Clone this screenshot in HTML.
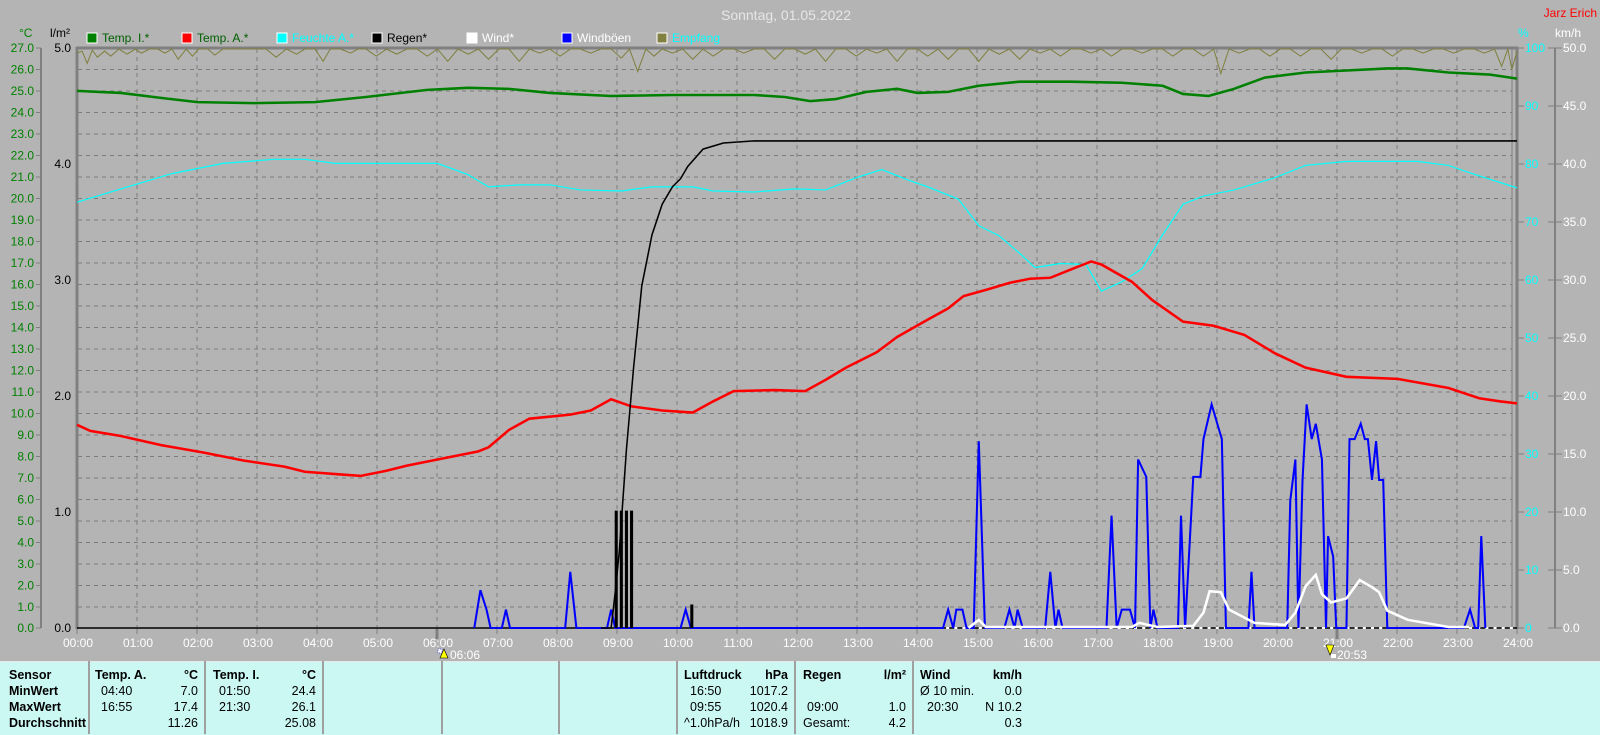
<!DOCTYPE html>
<html><head><meta charset="utf-8"><style>
html,body{margin:0;padding:0;width:1600px;height:734px;overflow:hidden;background:#b4b4b4;font-family:"Liberation Sans",Arial,sans-serif}
#panel{position:absolute;left:0;top:661px;width:1600px;height:73px;background:#ccf8f4;border-top:1px solid #e8e8e8}
.sep{position:absolute;top:661px;width:2px;height:73px;background:#a0a0a0}
.t{position:absolute;font-size:12.5px;color:#000;white-space:nowrap;line-height:15px}
.b{font-weight:bold}
.r{text-align:right}
</style></head><body>
<svg width="1600" height="661" style="position:absolute;left:0;top:0" font-family="Liberation Sans, Arial, sans-serif" font-size="12">
<text x="786" y="20" fill="#e6e6e6" font-size="14" text-anchor="middle">Sonntag, 01.05.2022</text>
<text x="1597" y="17" fill="#ff0000" font-size="12" text-anchor="end">Jarz Erich</text>
<text x="19" y="37" fill="#008000">°C</text>
<text x="50" y="37" fill="#000">l/m²</text>
<text x="1518" y="37" fill="#00ffff">%</text>
<text x="1555" y="37" fill="#fff">km/h</text>
<!-- legend -->
<g font-size="12">
<rect x="87" y="33" width="10" height="10" fill="#008000" stroke="#fff"/><text x="102" y="42" fill="#006000">Temp. I.*</text>
<rect x="182" y="33" width="10" height="10" fill="#ff0000" stroke="#fff"/><text x="197" y="42" fill="#006000">Temp. A.*</text>
<rect x="277" y="33" width="10" height="10" fill="#00ffff" stroke="#fff"/><text x="292" y="42" fill="#00ffff">Feuchte A.*</text>
<rect x="372" y="33" width="10" height="10" fill="#000" stroke="#fff"/><text x="387" y="42" fill="#000">Regen*</text>
<rect x="467" y="33" width="10" height="10" fill="#fff" stroke="#fff"/><text x="482" y="42" fill="#fff">Wind*</text>
<rect x="562" y="33" width="10" height="10" fill="#0000ff" stroke="#fff"/><text x="577" y="42" fill="#fff">Windböen</text>
<rect x="657" y="33" width="10" height="10" fill="#808040" stroke="#fff"/><text x="672" y="42" fill="#00ffff">Empfang</text>
</g>
<!-- grid -->
<g stroke="#7c7c7c" stroke-width="1" stroke-dasharray="4,4" id="grid"></g>
<g stroke="#7c7c7c" stroke-dasharray="4,4">
<path d="M78 69.5H1512M78 91H1512M78 112.5H1512M78 134H1512M78 155.5H1512M78 177H1512M78 198.5H1512M78 220H1512M78 241.5H1512M78 263H1512M78 284.5H1512M78 306H1512M78 327.5H1512M78 349H1512M78 370.5H1512M78 392H1512M78 413.5H1512M78 435H1512M78 456.5H1512M78 478H1512M78 499.5H1512M78 521H1512M78 542.5H1512M78 564H1512M78 585.5H1512M78 607H1512"/>
<path d="M137 49V627M197 49V627M257 49V627M317 49V627M377 49V627M437 49V627M497 49V627M557 49V627M617 49V627M677 49V627M737 49V627M797 49V627M857 49V627M917 49V627M977 49V627M1037 49V627M1097 49V627M1157 49V627M1217 49V627M1277 49V627M1337 49V627M1397 49V627M1457 49V627"/>
</g>
<!-- frame -->
<g stroke="#808080" fill="none">
<path d="M76 48H1518" stroke-width="3"/>
<path d="M77 47V629" stroke-width="3"/>
<path d="M1517 47V629" stroke-width="3"/>
<path d="M1512 48V628" stroke-width="1"/>
<path d="M41 48V628" stroke-width="2"/>
<path d="M1555 48V628" stroke-width="2"/>
<path d="M437 629V639M1337 629V639" stroke-width="3"/>
</g>
<g id="ticks" stroke="#808080" stroke-width="1">
<path d="M36 48H41M36 69.5H41M36 91H41M36 112.5H41M36 134H41M36 155.5H41M36 177H41M36 198.5H41M36 220H41M36 241.5H41M36 263H41M36 284.5H41M36 306H41M36 327.5H41M36 349H41M36 370.5H41M36 392H41M36 413.5H41M36 435H41M36 456.5H41M36 478H41M36 499.5H41M36 521H41M36 542.5H41M36 564H41M36 585.5H41M36 607H41M36 628H41"/>
<path d="M1517 48H1524M1517 106H1524M1517 164H1524M1517 222H1524M1517 280H1524M1517 338H1524M1517 396H1524M1517 454H1524M1517 512H1524M1517 570H1524M1517 628H1524"/>
<path d="M1548 48H1562M1548 106H1562M1548 164H1562M1548 222H1562M1548 280H1562M1548 338H1562M1548 396H1562M1548 454H1562M1548 512H1562M1548 570H1562M1548 628H1562"/>
<path d="M77 628V634M137 628V634M197 628V634M257 628V634M317 628V634M377 628V634M437 628V634M497 628V634M557 628V634M617 628V634M677 628V634M737 628V634M797 628V634M857 628V634M917 628V634M977 628V634M1037 628V634M1097 628V634M1157 628V634M1217 628V634M1277 628V634M1337 628V634M1397 628V634M1457 628V634M1517 628V634"/>
</g>
<!-- left °C labels -->
<g fill="#008000" text-anchor="end" font-size="12">
<text x="34" y="52">27.0</text><text x="34" y="73.5">26.0</text><text x="34" y="95">25.0</text><text x="34" y="116.5">24.0</text><text x="34" y="138">23.0</text><text x="34" y="159.5">22.0</text><text x="34" y="181">21.0</text><text x="34" y="202.5">20.0</text><text x="34" y="224">19.0</text><text x="34" y="245.5">18.0</text><text x="34" y="267">17.0</text><text x="34" y="288.5">16.0</text><text x="34" y="310">15.0</text><text x="34" y="331.5">14.0</text><text x="34" y="353">13.0</text><text x="34" y="374.5">12.0</text><text x="34" y="396">11.0</text><text x="34" y="417.5">10.0</text><text x="34" y="439">9.0</text><text x="34" y="460.5">8.0</text><text x="34" y="482">7.0</text><text x="34" y="503.5">6.0</text><text x="34" y="525">5.0</text><text x="34" y="546.5">4.0</text><text x="34" y="568">3.0</text><text x="34" y="589.5">2.0</text><text x="34" y="611">1.0</text><text x="34" y="632">0.0</text>
</g>
<g fill="#000" text-anchor="end" font-size="12">
<text x="71" y="52">5.0</text><text x="71" y="168">4.0</text><text x="71" y="284">3.0</text><text x="71" y="400">2.0</text><text x="71" y="516">1.0</text><text x="71" y="632">0.0</text>
</g>
<g fill="#00ffff" font-size="12">
<text x="1525" y="52">100</text><text x="1525" y="110">90</text><text x="1525" y="168">80</text><text x="1525" y="226">70</text><text x="1525" y="284">60</text><text x="1525" y="342">50</text><text x="1525" y="400">40</text><text x="1525" y="458">30</text><text x="1525" y="516">20</text><text x="1525" y="574">10</text><text x="1525" y="632">0</text>
</g>
<g fill="#fff" font-size="12">
<text x="1563" y="52">50.0</text><text x="1563" y="110">45.0</text><text x="1563" y="168">40.0</text><text x="1563" y="226">35.0</text><text x="1563" y="284">30.0</text><text x="1563" y="342">25.0</text><text x="1563" y="400">20.0</text><text x="1563" y="458">15.0</text><text x="1563" y="516">10.0</text><text x="1563" y="574">5.0</text><text x="1563" y="632">0.0</text>
</g>
<g fill="#fff" font-size="12" text-anchor="middle">
<text x="78" y="647">00:00</text><text x="138" y="647">01:00</text><text x="198" y="647">02:00</text><text x="258" y="647">03:00</text><text x="318" y="647">04:00</text><text x="378" y="647">05:00</text><text x="438" y="647">06:00</text><text x="498" y="647">07:00</text><text x="558" y="647">08:00</text><text x="618" y="647">09:00</text><text x="678" y="647">10:00</text><text x="738" y="647">11:00</text><text x="798" y="647">12:00</text><text x="858" y="647">13:00</text><text x="918" y="647">14:00</text><text x="978" y="647">15:00</text><text x="1038" y="647">16:00</text><text x="1098" y="647">17:00</text><text x="1158" y="647">18:00</text><text x="1218" y="647">19:00</text><text x="1278" y="647">20:00</text><text x="1338" y="647">21:00</text><text x="1398" y="647">22:00</text><text x="1458" y="647">23:00</text><text x="1518" y="647">24:00</text>
</g>
<text x="450" y="659" fill="#fff" font-size="12">06:06</text>
<path d="M440 658L444 649L448 658Z" fill="#ffff00" stroke="#000" stroke-width="0.6"/>
<rect x="438" y="649" width="4" height="4" fill="#fff" stroke="#00f" stroke-width="0.5" stroke-dasharray="1,1"/>
<text x="1337" y="659" fill="#fff" font-size="12">20:53</text>
<path d="M1326 645L1334 645L1330 655Z" fill="#ffff00" stroke="#000" stroke-width="0.6"/>
<rect x="1331" y="654" width="5" height="4" fill="#fff"/>
<!-- data -->
<svg x="77" y="48" width="1440" height="580" viewBox="77 47 1410 568" preserveAspectRatio="none" overflow="visible">
<polyline fill="none" stroke="#808040" stroke-width="1" points="77,52 82,50 87,62 92,49 97,56 104,50 110,55 118,48 126,53 134,48 140,52 148,48 156,48 163,52 170,48 176,58 184,48 190,55 196,48 205,48 212,54 220,48 230,48 240,48 250,48 262,48 272,56 282,48 292,53 300,48 310,48 318,60 325,48 335,48 345,52 352,48 360,48 370,55 380,48 390,53 400,48 410,48 420,55 430,48 440,60 450,48 460,53 470,48 480,58 490,48 500,48 510,60 520,48 530,52 540,48 550,55 560,48 570,48 580,52 590,48 600,48 610,57 618,48 626,70 634,48 642,55 650,48 660,52 670,48 680,58 690,48 700,55 710,48 720,48 730,52 740,48 750,48 760,58 770,48 780,48 790,53 800,48 810,60 820,48 830,48 840,55 850,48 860,52 870,48 880,60 890,48 900,48 910,55 920,48 930,58 940,48 950,48 960,60 970,48 980,53 990,48 1000,58 1010,48 1020,52 1030,48 1040,55 1050,48 1060,48 1070,52 1080,48 1090,55 1100,48 1110,48 1120,52 1130,48 1140,48 1150,55 1160,48 1170,48 1180,55 1190,48 1197,72 1205,48 1215,52 1225,48 1235,48 1245,55 1255,48 1265,48 1275,55 1285,48 1295,48 1305,58 1315,48 1325,48 1335,52 1345,48 1355,48 1365,55 1375,48 1385,48 1395,52 1405,48 1415,48 1425,52 1435,48 1445,48 1455,52 1465,48 1472,65 1478,48 1482,68 1487,50"/>
<polyline fill="none" stroke="#008000" stroke-width="2.5" points="77,89 120,91 160,96 195,100 250,101 310,100 360,95 420,88 460,86 500,87 540,91 600,94 660,93 740,93 770,95 795,99 820,97 850,90 880,87 900,91 930,90 960,84 1000,80 1050,80 1100,81 1140,84 1160,92 1185,94 1210,87 1240,76 1280,71 1320,69 1360,67 1380,67 1420,71 1460,73 1487,77"/>
<polyline fill="none" stroke="#00ffff" stroke-width="1.2" points="77,198 120,185 170,170 220,160 270,156 300,156 330,160 380,160 430,160 460,171 480,183 510,181 540,181 570,186 610,187 640,183 680,183 700,187 740,188 780,185 810,186 840,174 865,166 890,176 910,183 940,195 960,221 980,231 1000,248 1015,262 1040,258 1065,259 1080,285 1100,276 1120,263 1140,230 1160,200 1180,192 1210,186 1250,174 1280,162 1320,158 1390,158 1420,162 1440,169 1487,184"/>
<polyline fill="none" stroke="#ff0000" stroke-width="2.5" points="77,416 90,422 120,427 160,436 200,443 240,451 280,457 300,462 340,465 355,466 380,461 400,456 430,450 470,442 480,438 500,421 520,410 560,406 580,402 600,391 620,398 650,402 680,404 700,393 720,383 760,382 790,383 810,372 830,360 860,345 880,330 910,313 930,302 945,290 970,283 990,277 1010,273 1030,272 1050,264 1070,256 1080,259 1110,276 1130,294 1160,315 1190,319 1220,328 1250,346 1280,360 1320,369 1370,371 1420,380 1450,390 1470,393 1487,395"/>
<path d="M77 615H1487" stroke="#000" stroke-width="1.5"/>
<path d="M680 615H1487" stroke="#fff" stroke-width="2" stroke-dasharray="3,5"/>
<polyline fill="none" stroke="#0000ff" stroke-width="2" points="466,615 472,578 478,597 482,615 493,615 497,597 501,615 555,615 560,560 566,615 596,615 600,597 604,615 668,615 673,597 678,615 925,615 930,597 935,615 938,597 944,597 948,615 955,615 960,432 966,615 985,615 990,597 995,615 998,597 1003,615 1025,615 1030,560 1035,615 1038,597 1042,615 1085,615 1090,505 1095,615 1100,597 1108,597 1113,615 1116,450 1124,467 1128,615 1131,597 1135,615 1155,615 1158,505 1162,615 1170,467 1177,467 1180,430 1188,396 1195,420 1198,430 1202,615 1224,615 1227,560 1230,615 1262,615 1265,490 1270,450 1273,615 1277,470 1281,396 1286,430 1290,415 1296,450 1300,615 1302,525 1307,545 1310,615 1320,615 1323,430 1328,430 1334,415 1338,430 1341,430 1345,470 1349,432 1352,470 1356,470 1360,615 1435,615 1441,597 1446,615 1449,615 1452,525 1456,615"/>
<polyline fill="none" stroke="#fff" stroke-width="2.5" points="950,615 960,607 967,614 1110,614 1117,610 1135,614 1170,613 1180,600 1186,579 1197,580 1205,597 1230,610 1260,612 1270,600 1280,574 1290,563 1296,582 1305,590 1320,586 1333,568 1345,575 1352,580 1360,598 1380,607 1420,614 1440,614"/>
<polyline fill="none" stroke="#000" stroke-width="1.5" points="590,615 600,615 604,580 608,540 615,440 622,360 630,280 640,230 650,200 660,183 668,175 675,163 690,146 710,140 740,138 1487,138"/>
<path d="M605 615V500M610 615V500M615 615V500M620 615V500M679 615V592" stroke="#000" stroke-width="3"/>
</svg>
</svg>
<div id="panel"></div>
<div class="sep" style="left:88px"></div><div class="sep" style="left:204px"></div><div class="sep" style="left:322px"></div><div class="sep" style="left:441px"></div><div class="sep" style="left:558px"></div><div class="sep" style="left:676px"></div><div class="sep" style="left:794px"></div><div class="sep" style="left:912px"></div>
<div class="t b" style="left:9px;top:668px">Sensor</div>
<div class="t b" style="left:9px;top:684px">MinWert</div>
<div class="t b" style="left:9px;top:700px">MaxWert</div>
<div class="t b" style="left:9px;top:716px">Durchschnitt</div>
<div class="t b" style="left:95px;top:668px">Temp. A.</div>
<div class="t b r" style="left:150px;width:48px;top:668px">°C</div>
<div class="t" style="left:101px;top:684px">04:40</div><div class="t r" style="left:150px;width:48px;top:684px">7.0</div>
<div class="t" style="left:101px;top:700px">16:55</div><div class="t r" style="left:150px;width:48px;top:700px">17.4</div>
<div class="t r" style="left:150px;width:48px;top:716px">11.26</div>
<div class="t b" style="left:213px;top:668px">Temp. I.</div>
<div class="t b r" style="left:268px;width:48px;top:668px">°C</div>
<div class="t" style="left:219px;top:684px">01:50</div><div class="t r" style="left:268px;width:48px;top:684px">24.4</div>
<div class="t" style="left:219px;top:700px">21:30</div><div class="t r" style="left:268px;width:48px;top:700px">26.1</div>
<div class="t r" style="left:268px;width:48px;top:716px">25.08</div>
<div class="t b" style="left:684px;top:668px">Luftdruck</div>
<div class="t b r" style="left:740px;width:48px;top:668px">hPa</div>
<div class="t" style="left:690px;top:684px">16:50</div><div class="t r" style="left:740px;width:48px;top:684px">1017.2</div>
<div class="t" style="left:690px;top:700px">09:55</div><div class="t r" style="left:740px;width:48px;top:700px">1020.4</div>
<div class="t" style="left:684px;top:716px">^1.0hPa/h</div><div class="t r" style="left:740px;width:48px;top:716px">1018.9</div>
<div class="t b" style="left:803px;top:668px">Regen</div>
<div class="t b r" style="left:858px;width:48px;top:668px">l/m²</div>
<div class="t" style="left:807px;top:700px">09:00</div><div class="t r" style="left:858px;width:48px;top:700px">1.0</div>
<div class="t" style="left:803px;top:716px">Gesamt:</div><div class="t r" style="left:858px;width:48px;top:716px">4.2</div>
<div class="t b" style="left:920px;top:668px">Wind</div>
<div class="t b r" style="left:962px;width:60px;top:668px">km/h</div>
<div class="t" style="left:920px;top:684px">Ø 10 min.</div><div class="t r" style="left:962px;width:60px;top:684px">0.0</div>
<div class="t" style="left:927px;top:700px">20:30</div><div class="t r" style="left:962px;width:60px;top:700px">N 10.2</div>
<div class="t r" style="left:962px;width:60px;top:716px">0.3</div>
</body></html>
